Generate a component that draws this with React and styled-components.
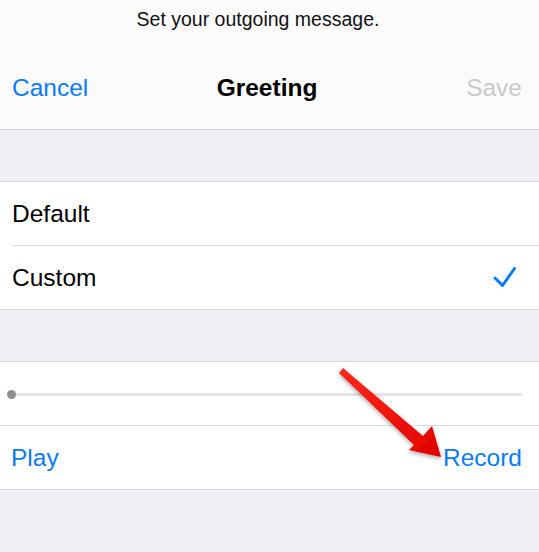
import React from "react";
import styled, { createGlobalStyle } from "styled-components";

const Global = createGlobalStyle`
  html, body { margin: 0; padding: 0; background: #efeff4; }
  body { font-family: "Liberation Sans", Arial, sans-serif; -webkit-font-smoothing: antialiased; }
  * { box-sizing: border-box; }
`;

const Screen = styled.div`
  position: relative;
  width: 539px;
  height: 552px;
  overflow: hidden;
  background: #efeff4;
`;

const Header = styled.header`
  background: #fbfbfc;
  border-bottom: 1px solid #d2d2d6;
`;

const Prompt = styled.div`
  height: 50px;
  padding: 10px 23px 0 0;
  text-align: center;
  font-size: 19.5px;
  line-height: 1;
  color: #111;
`;

const NavBar = styled.nav`
  height: 79px;
  display: grid;
  grid-template-columns: 1fr auto 1fr;
  align-items: center;
  padding: 0 17px 2px 12px;
  font-size: 24.5px;
  line-height: 1;
`;

const NavButton = styled.span`
  color: ${(p) => (p.$disabled ? "#c9c9ce" : "#0a7aff")};
  justify-self: ${(p) => (p.$end ? "end" : "start")};
`;

const Title = styled.span`
  font-weight: bold;
  color: #000;
`;

const Gap = styled.div`
  height: 51px;
`;

const Group = styled.section`
  background: #fff;
  border-top: 1px solid #d9d9dd;
  border-bottom: 1px solid #d9d9dd;
`;

const Separator = styled.div`
  height: 1px;
  background: #dedee2;
  margin-left: ${(p) => p.$inset || 0}px;
`;

const Row = styled.div`
  height: 63px;
  display: flex;
  align-items: center;
  justify-content: space-between;
  padding: 1px ${(p) => p.$right ?? 17}px 0 ${(p) => p.$left ?? 12}px;
  font-size: 24.5px;
  line-height: 1;
  color: ${(p) => (p.$link ? "#0a7aff" : "#000")};
`;

const SliderRow = styled.div`
  height: 63px;
  display: flex;
  align-items: center;
  padding: 2px 17px 0 7px;
`;

const Track = styled.div`
  position: relative;
  flex: 1;
  height: 3px;
  border-radius: 2px;
  background: #e4e4e8;
`;

const Knob = styled.div`
  position: absolute;
  left: 0;
  top: 50%;
  width: 9px;
  height: 9px;
  margin-top: -4.5px;
  border-radius: 50%;
  background: #8e8e93;
`;

const Check = styled.svg`
  display: block;
  width: 26px;
  height: 24px;
`;

const ArrowLayer = styled.svg`
  position: absolute;
  left: 0;
  top: 0;
  width: 539px;
  height: 552px;
  pointer-events: none;
`;

export default function App() {
  return (
    <Screen>
      <Global />
      <Header>
        <Prompt>Set your outgoing message.</Prompt>
        <NavBar>
          <NavButton>Cancel</NavButton>
          <Title>Greeting</Title>
          <NavButton $disabled $end>Save</NavButton>
        </NavBar>
      </Header>
      <Gap />
      <Group>
        <Row>Default</Row>
        <Separator $inset={12} />
        <Row $right={22}>
          <span>Custom</span>
          <Check viewBox="0 0 26 24">
            <path
              d="M4 12 L11.5 19.5 L23.5 2.5"
              fill="none"
              stroke="#0a7aff"
              strokeWidth="3"
              strokeLinecap="round"
              strokeLinejoin="round"
            />
          </Check>
        </Row>
      </Group>
      <Gap />
      <Group>
        <SliderRow>
          <Track>
            <Knob />
          </Track>
        </SliderRow>
        <Separator />
        <Row $link $left={11}>
          <span>Play</span>
          <span>Record</span>
        </Row>
      </Group>
      <ArrowLayer viewBox="0 0 539 552">
        <defs>
          <filter id="sh" x="-20%" y="-20%" width="140%" height="140%">
            <feDropShadow dx="0" dy="2" stdDeviation="2" floodColor="#000" floodOpacity="0.35" />
          </filter>
          <linearGradient id="rg" x1="0" y1="0" x2="1" y2="1">
            <stop offset="0" stopColor="#ff2a1a" />
            <stop offset="1" stopColor="#e00000" />
          </linearGradient>
        </defs>
        <polygon
          points="343,368 423,436 432,426 441,457 409,450 414,445 339,373"
          fill="url(#rg)"
          filter="url(#sh)"
        />
      </ArrowLayer>
    </Screen>
  );
}
